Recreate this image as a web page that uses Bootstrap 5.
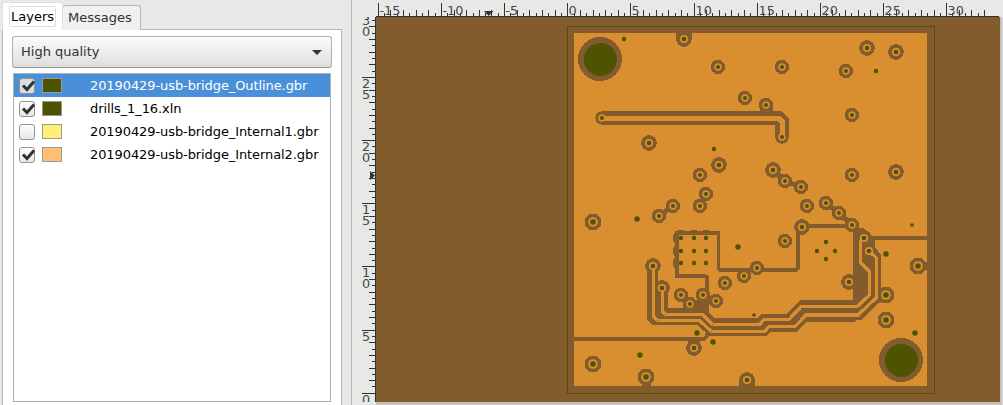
<!DOCTYPE html>
<html lang="en">
<head>
<meta charset="utf-8">
<title>Layers</title>
<link href="https://cdn.jsdelivr.net/npm/bootstrap@5.3.0/dist/css/bootstrap.min.css" rel="stylesheet">
<style>
body{font-family:"DejaVu Sans",sans-serif;font-size:13px;line-height:16px;background:#e8e8e7;color:#2e3436;width:1003px;height:405px;overflow:hidden}
.side{width:352px;height:405px;padding:2px 0 0 2px;border-right:1px solid #b6b6b3}
.side .nav-tabs{border:0;height:27px;position:relative;z-index:1}
.side .nav-link{color:#2e3436;border:1px solid #b6b6b3;border-bottom:0;border-radius:3px 3px 0 0;padding:0;line-height:16px}
.side .nav-link.active{width:61px;height:28px;background:#fff;padding:3px 0 0 6px}
.side .nav-link.active span{display:block;width:47px;height:21px;border:1px solid #dcdcdc;border-radius:2px;padding:2px 0 0 1px;line-height:16px}
.side .nav-link.other{width:78px;height:25px;margin-left:0;border-left:0;background:#f0f0ef;padding:4px 0 0 5px}
.pane{width:340px;height:380px;background:#fff;border:1px solid #b6b6b3;padding:6px 9px 0}
.combo{width:320px;height:32px;border:1px solid #b0b0ad;border-bottom-color:#969691;border-radius:3px;background:linear-gradient(#fbfbfb,#dededc);padding:0 9px 0 8px;color:#2e3436}
.layers{width:318px;height:329px;border:1px solid #b0b0ae;border-radius:0;margin:5px 0 0 1px;background:#fff}
.layers .list-group-item{height:23px;border:0;padding:0 0 0 5px;background:#fff;color:#000;border-radius:0;letter-spacing:-.09px}
.layers .list-group-item.active{background:#4a90d9;color:#fff;margin:0}
.tick{width:16px;height:16px;border:1px solid #93938f;border-radius:3px;background:linear-gradient(#fff,#e6e6e4)}
.active .tick{background:#dcdcda}
.tick svg{display:block;overflow:visible}
.sw{width:20px;height:15px;border:1px solid #999;margin:0 28px 0 7px}
.view{width:651px;height:405px}
.view svg{display:block}
.view text{font-family:"DejaVu Sans",sans-serif;font-size:12.8px;fill:#41484a}
</style>
</head>
<body>
<div class="d-flex">
  <aside class="side flex-shrink-0">
    <div class="nav nav-tabs align-items-end flex-nowrap">
      <a class="nav-link active"><span>Layers</span></a>
      <a class="nav-link other">Messages</a>
    </div>
    <div class="pane">
      <div class="combo d-flex align-items-center justify-content-between"><span>High quality</span><svg width="10" height="5"><path d="M0 0H10L5 5Z" fill="#2e3436"/></svg></div>
      <div class="layers list-group">
        <div class="list-group-item active d-flex align-items-center"><span class="tick"><svg width="14" height="14"><path d="M3 6.5L7 10.5L14 2.5" fill="none" stroke="#2e3436" stroke-width="3"/></svg></span><span class="sw" style="background:#4e5300"></span><span>20190429-usb-bridge_Outline.gbr</span></div>
        <div class="list-group-item d-flex align-items-center"><span class="tick"><svg width="14" height="14"><path d="M3 6.5L7 10.5L14 2.5" fill="none" stroke="#2e3436" stroke-width="3"/></svg></span><span class="sw" style="background:#4e5300"></span><span>drills_1_16.xln</span></div>
        <div class="list-group-item d-flex align-items-center"><span class="tick"></span><span class="sw" style="background:#ffef73"></span><span>20190429-usb-bridge_Internal1.gbr</span></div>
        <div class="list-group-item d-flex align-items-center"><span class="tick"><svg width="14" height="14"><path d="M3 6.5L7 10.5L14 2.5" fill="none" stroke="#2e3436" stroke-width="3"/></svg></span><span class="sw" style="background:#ffbf73"></span><span>20190429-usb-bridge_Internal2.gbr</span></div>
      </div>
    </div>
  </aside>
  <main class="view flex-shrink-0">
    <svg id="hruler" width="651" height="17" viewBox="352 0 651 17"><path d="M376 16.5H999" stroke="#2e3436"/><path d="M484 11H493.5L488.7 16Z" fill="#2e3436"/></svg>
    <div class="d-flex">
      <svg id="vruler" width="24" height="385" viewBox="352 17 24 385"><path d="M375.5 17V402" stroke="#2e3436"/><path d="M370 171V180L375 175.5Z" fill="#2e3436"/></svg>
      <svg width="627" height="388" viewBox="376 17 627 388" shape-rendering="crispEdges">
        <path d="M376 17H1003V405H376Z" fill="#c3c3c1"/><path d="M1002 17H1003V405H1002Z" fill="#e0e0df"/>
        <path d="M376 17H1000V402H376Z" fill="#835c2d"/>
        <path d="M574 33H927V386H574Z" fill="#d98e2f"/>
        <g id="clear" fill="#835c2d"></g>
        <!-- bus clearance -->
        <path fill="#835c2d" d="M647 266H658V288H668V308H683V300H709V313L714 318H757L761 314H787L800 300H853V228H864L875 240V247L881 255V303H879L861 320H856L854 322H806L796 332H770L767 336H710L697 325H652L647 319Z"/>
        <g fill="none" stroke="#835c2d" stroke-width="4">
          <path d="M707 300V277.5L705 276H677V233H718V268L720 270H796L798 268V227L799 226H852"/>
          <path d="M574 339H704L707 336V333"/><path d="M864 238H927"/>
          <path d="M673 206L659 216M773 170L785 181L801 187M826 203L839 213L852 225L864 238M706 194L700 206" stroke-width="5"/>
        </g>
        <path d="M679 235H717V274H679Z" fill="#d98e2f"/>
        <path fill="#835c2d" d="M676 33H692V39H676ZM642 377H651V386H642ZM739 380H755V386H739ZM688 341H700V348H688ZM760 105H773V114H760ZM918 262H927V270H918Z"/>
        <path d="M602 118H778.5L782 121.5V137" fill="none" stroke="#835c2d" stroke-width="13.5" stroke-linecap="round"/>
        <g fill="none" stroke="#d98e2f" stroke-width="3.2">
          <path d="M602 118H778.5L782 121.5V137" stroke-width="5"/>
          <path d="M653.5 266V316.5L657.5 320.5H699.5L711.5 331.5H764.7L768.7 326.7H795L806 315H858L876.5 297.5V258L869 251"/>
          <path d="M662.5 288V311.5L665.5 314.5H702.5L712.5 324.5H759.3L764 319.7H788.7L801 306.7H857L869.5 295V271.5L860.5 262.5V240"/>
        </g>
        <g id="vias" shape-rendering="geometricPrecision"></g>
        <rect x="567.5" y="26.5" width="367" height="367" fill="none" stroke="#4e5300"/>
      </svg>
    </div>
  </main>
</div>
<script src="https://cdn.jsdelivr.net/npm/bootstrap@5.3.0/dist/js/bootstrap.bundle.min.js"></script>
<script>
const NS='http://www.w3.org/2000/svg';
function add(p,t,a,s){const e=document.createElementNS(NS,t);for(const k in a)e.setAttribute(k,a[k]);if(s)e.textContent=s;p.appendChild(e);return e;}
const $=id=>document.getElementById(id);
const step=12.63, vstep=12.633;
let h='',v='';
for(let k=-30;k<=66;k++){const x=Math.floor(567.75+k*step/2)+.5;if(x<376||x>999)continue;h+=`M${x} ${k%10===0?3:k%2===0?10:13}V16`;}
for(let k=0;k<=60;k++){const y=Math.floor(393.3-k*vstep/2)+.5;if(y<17)continue;v+=`M${k%10===0?362:k%2===0?369:372} ${y}H375`;}
add($('hruler'),'path',{d:h,stroke:'#2e3436'});
add($('vruler'),'path',{d:v,stroke:'#2e3436'});
for(let n=-15;n<=30;n+=5)add($('hruler'),'text',{x:Math.floor(567.75+n*step)+1.5,y:15},String(n));
for(let n=0;n<=30;n+=5){
  const y=Math.floor(393.3-n*vstep)+11, t=add($('vruler'),'text',{});
  [...String(n)].forEach((c,i)=>add(t,'tspan',{x:362,y:y+i*11},c));
}
// vias: x, y, size (0 small, 1 medium, 2 large)
const vias=[[684,39,1],[718,67,0],[782,67,0],[745,98,0],[766,105,0],[602,118,0],[782,137,0],[649,143,1],[867,48,1],[896,52,1],[846,71,0],[852,115,0],[719,165,1],[700,175,0],[706,194,0],[700,206,0],[673,206,0],[659,216,0],[593,222,2],[653,266,1],[757,268,0],[744,276,0],[773,170,1],[785,181,0],[801,187,0],[807,206,0],[826,203,0],[839,213,0],[852,225,0],[802,227,1],[785,241,0],[852,175,0],[896,172,1],[864,238,1],[869,251,1],[918,266,2],[662,288,1],[681,295,0],[690,304,0],[703,295,0],[716,301,0],[725,283,0],[694,348,1],[593,364,2],[646,377,2],[747,380,1],[849,282,1],[886,295,2],[886,320,2]];
const noClear=new Set(['869,251','602,118','782,137']);
for(const [x,y,s] of vias){
  if(!noClear.has(x+','+y))add($('clear'),'circle',{cx:x,cy:y,r:[7.2,7.8,8.4][s]});
  add($('vias'),'circle',{cx:x,cy:y,r:[3.7,4.1,4.8][s],fill:'#d98e2f'});
  add($('vias'),'circle',{cx:x,cy:y,r:[2,2.3,2.8][s],fill:'#4e5300'});
}
for(const [x,y] of [[681,238],[681,251],[681,263],[694,238],[706,238]])add($('clear'),'circle',{cx:x,cy:y,r:8.2});
for(const [x,y] of [[600,59],[901,360]]){add($('clear'),'circle',{cx:x,cy:y,r:22});add($('vias'),'circle',{cx:x+.4,cy:y+.4,r:16.5,fill:'#4e5300'});}
const dots=[[624,39,2.2],[714,149,2.2],[876,71,2.2],[637,219,2.7],[738,247,2.7],[912,225,1.8],[886,254,2.7],[826,242,2.2],[817,251,2.2],[835,251,2.2],[826,259,2.2],[697,333,2.7],[713,342,2.7],[754,315,1.8],[640,355,2.7],[915,333,2.7]];
for(const x of [681,694,706])for(const y of [238,251,263])dots.push([x,y,2.2]);
for(const [x,y,r] of dots)add($('vias'),'circle',{cx:x,cy:y,r:r,fill:'#4e5300'});
</script>
</body>
</html>
